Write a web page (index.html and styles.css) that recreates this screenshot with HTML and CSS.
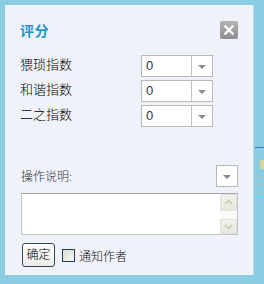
FILE: index.html
```html
<!DOCTYPE html>
<html lang="zh">
<head>
<meta charset="utf-8">
<link rel="stylesheet" href="styles.css">
</head>
<body>
<div class="stage">
  <div class="panel">
    <div class="header">
      <span class="title">评分</span>
      <span class="close"><svg width="18" height="18" viewBox="0 0 18 18"><path d="M5.5 5.5 L12.5 12.5 M12.5 5.5 L5.5 12.5" stroke="#fff" stroke-width="2.4" stroke-linecap="square"/></svg></span>
    </div>
    <div class="rows">
      <div class="row"><span class="label">猥琐指数</span><span class="select"><span class="val">0</span><span class="arrow"></span></span></div>
      <div class="row"><span class="label">和谐指数</span><span class="select"><span class="val">0</span><span class="arrow"></span></span></div>
      <div class="row"><span class="label">二之指数</span><span class="select"><span class="val">0</span><span class="arrow"></span></span></div>
    </div>
    <div class="oprow">
      <span class="oplabel">操作说明:</span>
      <span class="mini"><span class="arrow"></span></span>
    </div>
    <div class="textarea">
      <div class="scroll">
        <span class="sbtn"><svg width="17" height="17" viewBox="0 0 17 17"><path d="M5 10 L8.5 6.5 L12 10" fill="none" stroke="#c4c6bc" stroke-width="1.6"/></svg></span>
        <span class="track"></span>
        <span class="sbtn"><svg width="17" height="15" viewBox="0 0 17 15"><path d="M5 6 L8.5 9.5 L12 6" fill="none" stroke="#c4c6bc" stroke-width="1.6"/></svg></span>
      </div>
    </div>
    <div class="actions">
      <span class="btn">确定</span>
      <span class="check"></span>
      <span class="checklabel">通知作者</span>
    </div>
  </div>
  <span class="bg-line"></span>
  <span class="bg-mark"></span>
  <span class="bg-yellow"></span>
  <span class="bg-yellow2"></span>
</div>
</body>
</html>
```
FILE: styles.css
```css
html, body {
  margin: 0;
  padding: 0;
}
body {
  width: 264px;
  height: 284px;
  background: #8acde2;
  font-family: "Noto Sans CJK SC", "Noto Sans", sans-serif;
  overflow: hidden;
}
.stage {
  position: relative;
  width: 264px;
  height: 284px;
  padding: 5px 0 0 5px;
  box-sizing: border-box;
}
.panel {
  width: 249px;
  height: 270px;
  background: #eff3f9;
  border-right: 1px solid #b4dfec;
  box-sizing: border-box;
  padding: 16px 15px 0 15px;
  display: flex;
  flex-direction: column;
}
.header {
  display: flex;
  justify-content: space-between;
  align-items: center;
  height: 18px;
}
.title {
  color: #1c94c8;
  font-weight: bold;
  font-size: 14px;
  line-height: 18px;
  letter-spacing: 0.5px;
}
.close {
  width: 18px;
  height: 18px;
  border-radius: 2px;
  background: linear-gradient(#b4b4b4, #8e8e8e);
  display: block;
}
.close svg { display: block; }
.rows {
  margin-top: 16px;
  display: flex;
  flex-direction: column;
  gap: 3px;
}
.row {
  display: flex;
  align-items: center;
  height: 22px;
}
.label {
  width: 121px;
  font-size: 13px;
  font-weight: 300;
  color: #000;
  line-height: 22px;
  position: relative;
  top: -2px;
}
.select {
  width: 72px;
  height: 22px;
  box-sizing: border-box;
  border: 1px solid #b8b8b8;
  background: #fff;
  display: flex;
}
.val {
  width: 50px;
  border-right: 1px solid #c4c4c4;
  font-family: "Liberation Sans", Arial, sans-serif;
  font-size: 13px;
  color: #333;
  line-height: 20px;
  padding-left: 4px;
  box-sizing: border-box;
}
.arrow {
  flex: 1;
  display: flex;
  align-items: center;
  justify-content: center;
}
.arrow::after {
  content: "";
  width: 0;
  height: 0;
  border-left: 4px solid transparent;
  border-right: 4px solid transparent;
  border-top: 4px solid #8a8a8a;
  margin-top: 1px;
}
.oprow {
  margin-top: 38px;
  display: flex;
  justify-content: space-between;
  align-items: center;
  height: 22px;
}
.oplabel {
  font-size: 12px;
  font-weight: 300;
  color: #333;
  padding-left: 1px;
  position: relative;
  top: -1px;
}
.mini {
  width: 22px;
  height: 22px;
  box-sizing: border-box;
  border: 1px solid #b8b8b8;
  background: #fff;
  display: flex;
}
.textarea {
  margin: 6px 0 0 1px;
  height: 42px;
  box-sizing: border-box;
  border: 1px solid #c4c4c4;
  border-top-color: #a4a4a4;
  background: #fff;
  display: flex;
  justify-content: flex-end;
}
.scroll {
  width: 17px;
  display: flex;
  flex-direction: column;
  background: #fbfbf9;
}
.sbtn {
  height: 17px;
  background: linear-gradient(#f2f2ec, #e6e6dc);
  border-radius: 2px;
  border: 1px solid #e0e0d8;
  box-sizing: border-box;
  display: block;
}
.sbtn:last-child { height: 15px; }
.sbtn svg { display: block; margin: -1px 0 0 -1px; }
.track { flex: 1; }
.actions {
  margin-top: 8px;
  margin-left: 2px;
  display: flex;
  align-items: center;
  height: 24px;
}
.btn {
  width: 33px;
  height: 24px;
  box-sizing: border-box;
  border: 1px solid #2a4560;
  border-radius: 3px;
  background: linear-gradient(#ffffff, #ecebe4);
  font-size: 12px;
  font-weight: 300;
  color: #000;
  display: flex;
  align-items: center;
  justify-content: center;
  line-height: 1;
  padding-bottom: 2px;
}
.check {
  width: 13px;
  height: 13px;
  box-sizing: border-box;
  border: 1px solid #213e5c;
  background: linear-gradient(135deg, #dcdcd4, #f8f8f4);
  margin-left: 7px;
}
.checklabel {
  font-size: 12px;
  font-weight: 300;
  color: #111;
  margin-left: 4px;
}
.bg-line {
  position: absolute;
  left: 255px;
  top: 147px;
  width: 9px;
  height: 1px;
  background: #3a74a8;
}
.bg-mark {
  position: absolute;
  left: 257px;
  top: 176px;
  width: 7px;
  height: 9px;
  border-top: 1px solid #a8c4b8;
  border-bottom: 1px solid #a8c4b8;
  box-sizing: border-box;
}
.bg-yellow {
  position: absolute;
  left: 260px;
  top: 160px;
  width: 4px;
  height: 9px;
  background: #d8d49a;
}
.bg-yellow2 {
  position: absolute;
  left: 256px;
  top: 195px;
  width: 8px;
  height: 1px;
  background: #d8c850;
}
```
